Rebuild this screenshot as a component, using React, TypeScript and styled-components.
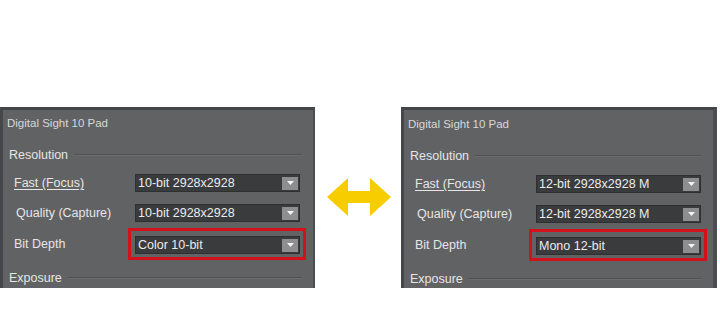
import * as React from 'react';
import styled, { createGlobalStyle, css } from "styled-components";

const GlobalStyle = createGlobalStyle`
    html, body {
        margin: 0;
        padding: 0;
        background: #ffffff;
    }
    body {
        font-family: "Liberation Sans", Arial, sans-serif;
    }
`;

interface IRow
{
    label: string;
    value: string;
    underline?: boolean;
    highlight?: boolean;
    indent: number;
}

interface IPanelProps
{
    rows: IRow[];
    side: "left" | "right";
}

const leftRows: IRow[] = [
    { label: "Fast (Focus)", value: "10-bit 2928x2928", underline: true, indent: 14 },
    { label: "Quality (Capture)", value: "10-bit 2928x2928", indent: 16 },
    { label: "Bit Depth", value: "Color 10-bit", highlight: true, indent: 14 },
];

const rightRows: IRow[] = [
    { label: "Fast (Focus)", value: "12-bit 2928x2928 M", underline: true, indent: 14 },
    { label: "Quality (Capture)", value: "12-bit 2928x2928 M", indent: 16 },
    { label: "Bit Depth", value: "Mono 12-bit", highlight: true, indent: 14 },
];

export default function App()
{
    return <>
        <GlobalStyle/>
        <Page>
            <CameraPanel rows={leftRows} side="left"/>
            <ArrowArea>
                <svg width="64" height="38" viewBox="0 0 64 38">
                    <polygon fill="#f8cd00" points="0,19 21,0 21,13 43,13 43,0 64,19 43,38 43,25 21,25 21,38"/>
                </svg>
            </ArrowArea>
            <CameraPanel rows={rightRows} side="right"/>
        </Page>
    </>
}

const CameraPanel: React.FC<IPanelProps> = (props) => {
    return <Panel side={props.side}>
        <Header>Digital Sight 10 Pad</Header>
        <SectionHead><span>Resolution</span><Rule/></SectionHead>
        {props.rows.map(row =>
            <FormRow key={row.label}>
                <Label indent={row.indent} underline={row.underline}>{row.label}</Label>
                {row.highlight
                    ? <Highlight><Dropdown value={row.value}/></Highlight>
                    : <Dropdown value={row.value}/>}
            </FormRow>
        )}
        <SectionHead bottom><span>Exposure</span><Rule/></SectionHead>
    </Panel>
}

const Dropdown: React.FC<{value: string}> = (props) => {
    return <SelectBox>
        <SelectText>{props.value}</SelectText>
        <SelectButton>
            <svg width="7" height="4" viewBox="0 0 7 4"><polygon points="0,0 7,0 3.5,4" fill="#f4f4f4"/></svg>
        </SelectButton>
    </SelectBox>
}

const Page = styled.div`
    display: flex;
    align-items: flex-start;
    padding-top: 107px;
    width: 720px;
    height: 314px;
    box-sizing: border-box;
    overflow: hidden;
`;

const ArrowArea = styled.div`
    width: 86px;
    height: 181px;
    display: flex;
    justify-content: center;
    padding-top: 71px;
    box-sizing: border-box;
    padding-left: 1px;
`;

const Panel = styled.div<{side: "left" | "right"}>`
    width: ${props => props.side === "left" ? 315 : 316}px;
    height: 181px;
    box-sizing: border-box;
    overflow: hidden;
    background: #606264;
    border-top: 3px solid #444547;
    border-left: 3px solid #46474a;
    border-right: ${props => props.side === "left" ? 2 : 4}px solid #4c4d50;
    color: #e6e6e6;
    ${props => props.side === "right" && css`
        padding-top: 1px;
    `}
`;

const Header = styled.div`
    height: 27px;
    line-height: 27px;
    padding-left: 4px;
    font-size: 11.5px;
    color: #d8d8d8;
`;

const SectionHead = styled.div<{bottom?: boolean}>`
    display: flex;
    align-items: center;
    gap: 6px;
    height: 30px;
    box-sizing: border-box;
    padding: 4px 11px 0 6px;
    font-size: 12.5px;
    margin-top: ${props => props.bottom ? 3 : 1}px;
`;

const Rule = styled.div`
    flex: 1;
    height: 1px;
    background: #505153;
    border-bottom: 1px solid #6a6c6e;
`;

const FormRow = styled.div`
    display: grid;
    grid-template-columns: 132px 165px;
    align-items: center;
    height: 30px;
`;

const Label = styled.span<{indent: number; underline?: boolean}>`
    padding-left: ${props => props.indent - 3}px;
    font-size: 12.5px;
    ${props => props.underline && css`
        text-decoration: underline;
        text-underline-offset: 2px;
    `}
`;

const Highlight = styled.div`
    margin: 0 -6px 0 -7px;
    padding: 5px 3px 3px 4px;
    border: 3px solid #d3111c;
`;

const SelectBox = styled.div`
    display: flex;
    align-items: center;
    height: 18px;
    background: #3a3b3d;
    border: 1px solid #2e2f31;
    box-sizing: border-box;
    padding: 0 1px 0 2px;
`;

const SelectText = styled.span`
    flex: 1;
    font-size: 12.5px;
    color: #ececec;
    white-space: nowrap;
`;

const SelectButton = styled.div`
    width: 16px;
    height: 13px;
    background: #8c8e90;
    display: flex;
    align-items: center;
    justify-content: center;
`;
